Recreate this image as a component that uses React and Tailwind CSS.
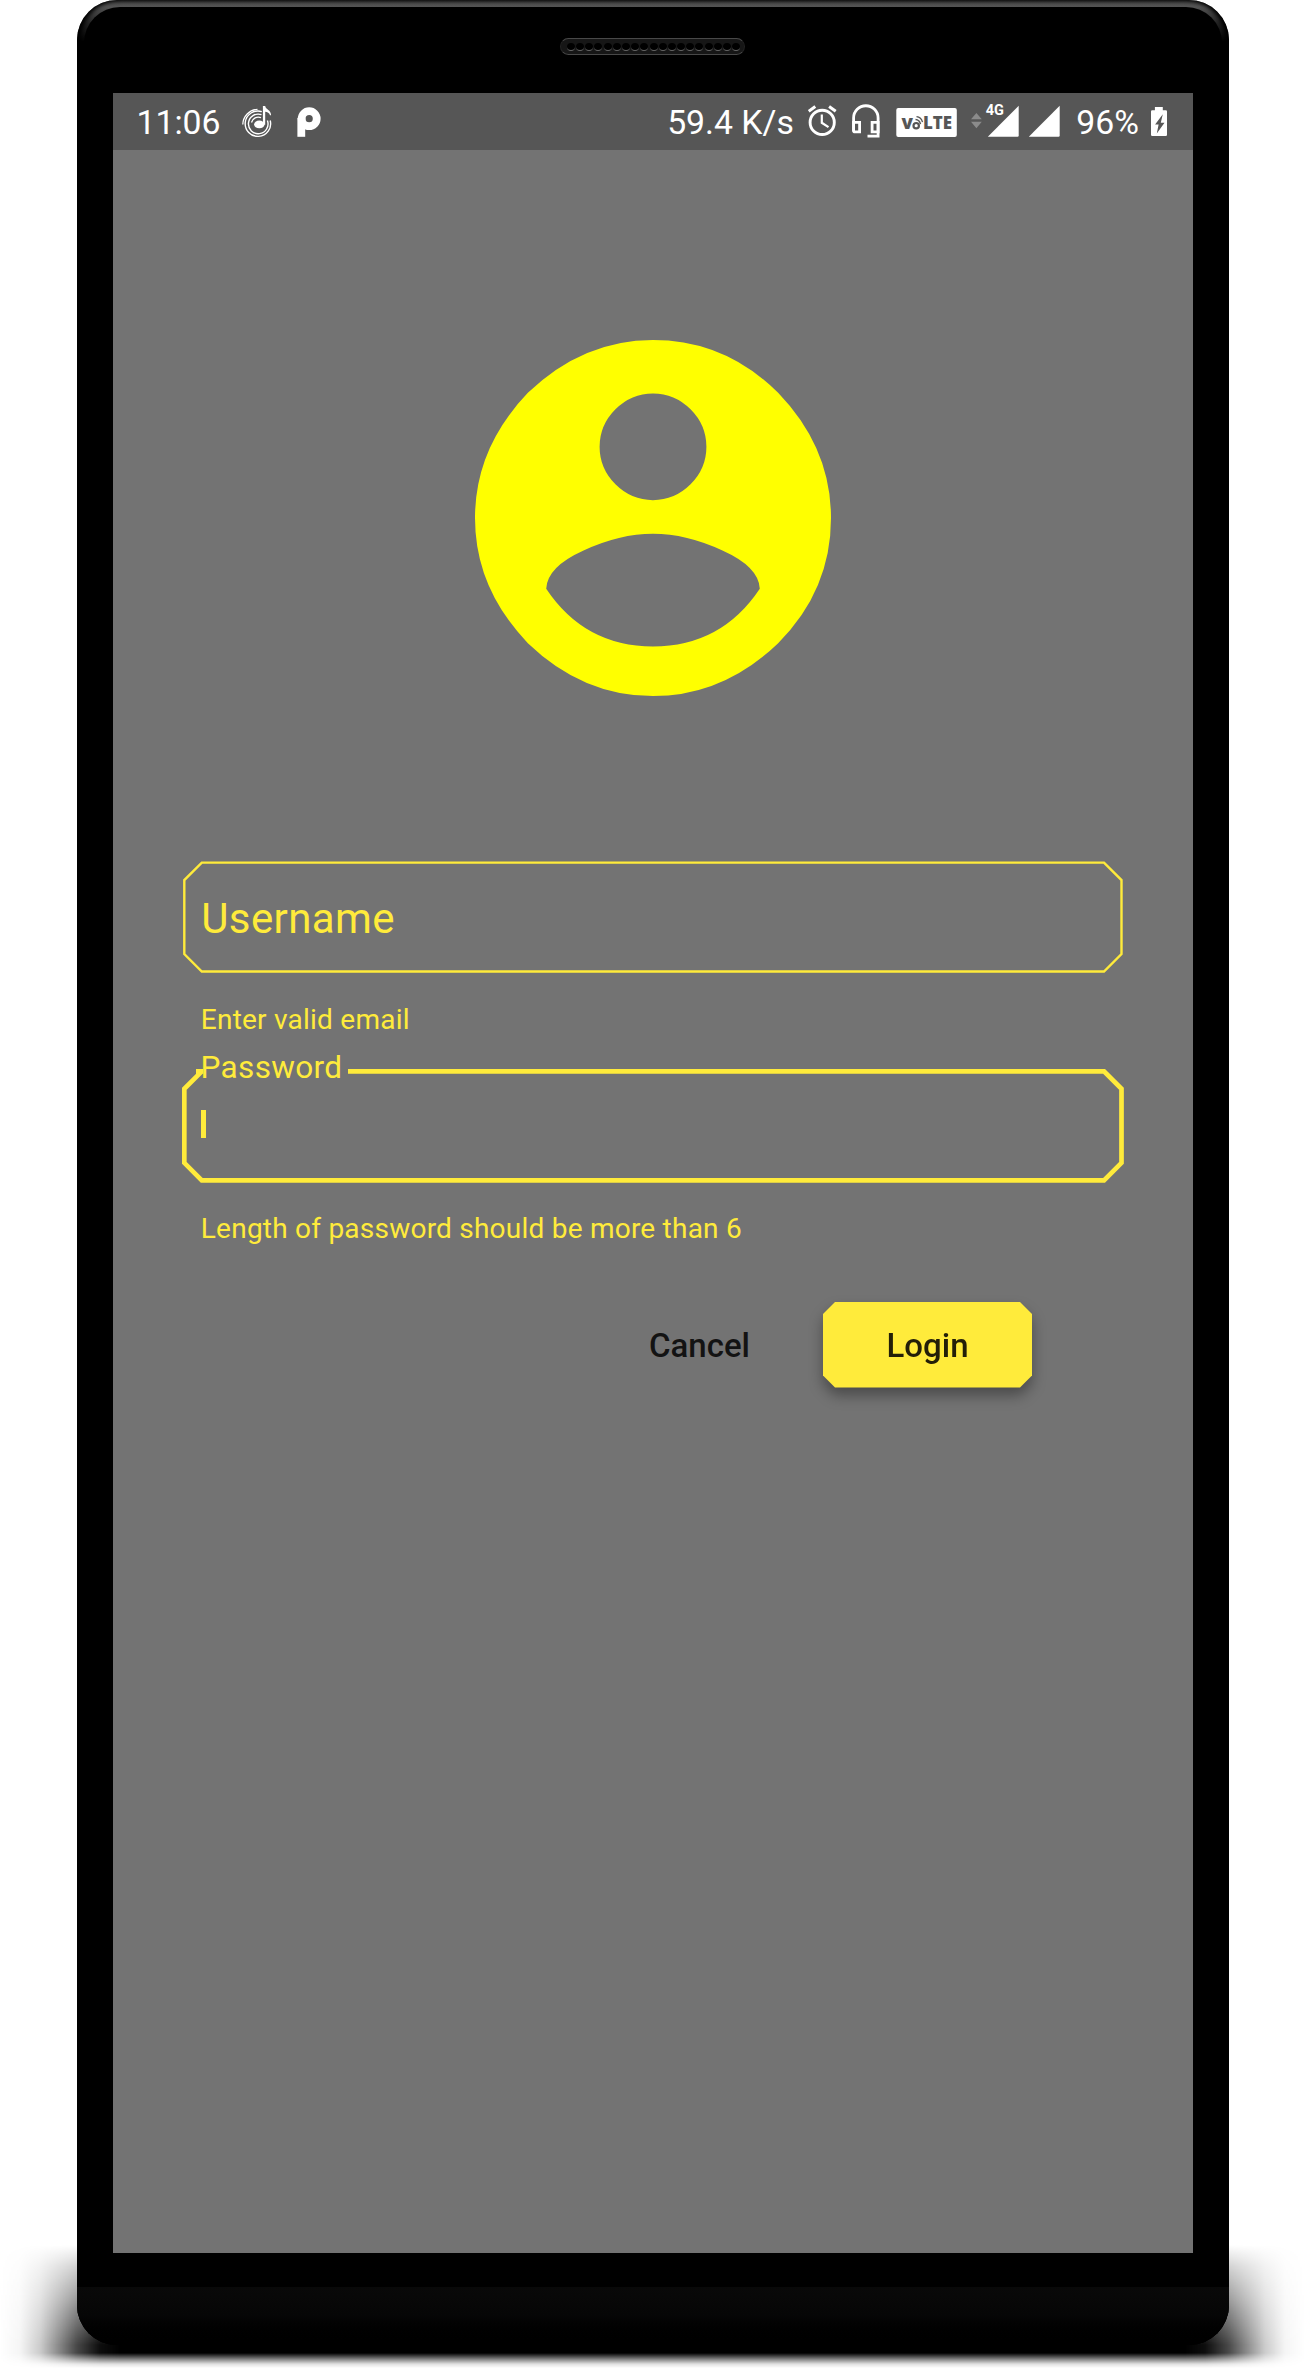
import React from "react";

function MusicIcon() {
  return (
    <svg className="ml-[21px] h-[57px] w-[30px]" viewBox="242 93 30 57" fill="none" stroke="#fff">
      <path d="M242.8 124.500A15.6 15.6 0 0 1 257.500 109.300" strokeWidth="1.3" />
      <path d="M261.800 111.600A12.700 12.700 0 1 0 270.200 120.500" strokeWidth="1.4" />
      <path d="M261.500 114.700A9.800 9.800 0 1 0 267.400 120.500" strokeWidth="1.4" />
      <path d="M261 117.700A6.900 6.900 0 0 0 251.500 122.500" strokeWidth="1.3" />
      <ellipse cx="259.300" cy="124.400" rx="5.200" ry="3.900" fill="#fff" stroke="none" />
      <path d="M262.900 106h2.300c.4 3.400 5.800 3.900 5.900 9.200l-1.100.1c-.5-2.300-2.800-3.300-4.800-3.600v13h-2.300z" fill="#fff" stroke="none" />
    </svg>
  );
}

function PLogo() {
  return (
    <svg className="ml-6 h-[57px] w-[26px]" viewBox="296 93 26 57">
      <circle cx="309.200" cy="118.700" r="7.500" fill="none" stroke="#fff" strokeWidth="7.800" />
      <rect x="297.400" y="118" width="7.800" height="18.800" fill="#fff" />
    </svg>
  );
}

function AlarmIcon() {
  return (
    <svg className="ml-[14px] h-[57px] w-[29px]" viewBox="808 93 29 57" fill="none" stroke="#fff">
      <circle cx="822.200" cy="122.400" r="12.100" strokeWidth="2.900" />
      <path d="M821.800 114.500v8.300l6.700 4.300" strokeWidth="2.200" />
      <path d="M808.700 111.300l6.600-4.800M835.700 111.300l-6.600-4.800" strokeWidth="3" />
    </svg>
  );
}

function HeadsetIcon() {
  return (
    <svg className="ml-[15px] h-[57px] w-[28px]" viewBox="852 93 28 57" fill="none" stroke="#fff" strokeWidth="2.800">
      <path d="M853.600 131.500V118a12.200 12.200 0 0 1 24.500 0v18.200h-10.600" />
      <path d="M853.600 122.300h6v9.600h-4.500q-1.500 0-1.500-1.500z" />
      <path d="M878.100 122.300h-6v9.600h6z" />
    </svg>
  );
}

function VolteBadge() {
  return (
    <svg className="ml-4 h-[57px] w-[61px]" viewBox="896 93 61 57">
      <rect x="896.300" y="108" width="60.500" height="29" rx="2" fill="#fff" />
      <g fill="#565656" fontFamily="Open Sans, sans-serif" fontWeight="800">
        <text x="901.600" y="128.900" fontSize="16.500">V</text>
        <text x="923" y="128.900" fontSize="16.900">LTE</text>
      </g>
      <g fill="none" stroke="#565656">
        <circle cx="916.200" cy="125.700" r="2.700" strokeWidth="2.200" />
        <path d="M915.500 119.600q4 .2 5 4.600" strokeWidth="1.500" />
        <path d="M916.500 116.700q4.800.6 6 5.500" strokeWidth="1.300" />
      </g>
    </svg>
  );
}

function Signals() {
  return (
    <svg className="ml-[14px] h-[57px] w-[89px]" viewBox="971 93 89 57">
      <path d="M971 119.300l5.400-6.300 5.400 6.300zM971 121.800h10.800l-5.400 6.400z" fill="#8b8b8b" />
      <path d="M987.800 136.800l30.900-31v29.800q0 1.200-1.200 1.200z" fill="#fff" />
      <path d="M1028.800 136.800l30.900-31v29.800q0 1.200-1.200 1.200z" fill="#fff" />
      <text x="985.800" y="115.200" fontSize="14.500" fontWeight="700" fontFamily="Roboto, sans-serif" fill="#fff" stroke="#565656" strokeWidth="2.500" paintOrder="stroke">4G</text>
    </svg>
  );
}

function BatteryIcon() {
  return (
    <svg className="ml-3 h-[57px] w-4" viewBox="1151 93 16 57">
      <path d="M1154.900 107h7.900v3.300h3q1.200 0 1.200 1.200v23.300q0 1.200-1.200 1.200h-13.600q-1.200 0-1.200-1.200v-23.300q0-1.200 1.200-1.200h2.700z" fill="#fff" />
      <path d="M1162.800 114.300l-7.700 10.200h3.500l-1.800 8.900 7.700-10.600h-3.700z" fill="#565656" />
    </svg>
  );
}

function StatusBar() {
  return (
    <div className="flex h-[57px] items-center bg-[#565656] pr-[26px] pl-[23.500px] text-[33.750px] leading-[40px] whitespace-nowrap text-white">
      <span className="w-[84.500px] pt-[2px]">11:06</span>
      <MusicIcon />
      <PLogo />
      <span className="ml-auto pt-[2px]">59.4 K/s</span>
      <AlarmIcon />
      <HeadsetIcon />
      <VolteBadge />
      <Signals />
      <span className="ml-[16.500px] pt-[2px]">96%</span>
      <BatteryIcon />
    </div>
  );
}

function Avatar() {
  return (
    <svg className="mx-auto mt-[190px] size-[356px]" viewBox="2 2 20 20" fill="#ffff00" fillRule="evenodd">
      <path d="M12 2Q16.060 2 19.030 4.970Q22 8.060 22 12Q22 16.060 19.030 19.030Q15.940 22 12 22Q8.060 22 4.970 19.030Q2 15.940 2 12Q2 8.060 4.970 4.970Q8.060 2 12 2ZM12 5Q10.780 5 9.890 5.890Q9 6.780 9 8Q9 9.220 9.890 10.110Q10.780 11 12 11Q13.220 11 14.110 10.110Q15 9.220 15 8Q15 6.780 14.110 5.890Q13.220 5 12 5ZM12 19.220Q8.160 19.220 6 15.980Q6.050 14.750 8.100 13.830Q10.130 12.890 12 12.890Q13.870 12.890 15.900 13.830Q17.950 14.750 18 15.980Q15.840 19.220 12 19.220Z" />
    </svg>
  );
}

function Speaker() {
  const holes = Array.from({ length: 19 }, (_, i) => i);
  return (
    <div className="relative mt-[38px] ml-[483px] flex h-[17px] w-[185px] items-center justify-center gap-[1.200px] rounded-full border border-t-[#484848] border-r-[#222] border-b-[#484848] border-l-[#222] bg-[#161616] pt-px pl-[2px]">
      {holes.map((i) => (
        <span key={i} className="size-2 rounded-full border-b border-[#666] bg-black" />
      ))}
    </div>
  );
}

function UsernameField() {
  return (
    <div className="relative flex h-[112px] items-center pt-[3px] pl-[19.200px]">
      <svg className="absolute inset-0 h-[112px] w-[942px]" viewBox="182 861 942 112" fill="none">
        <path d="M201.800 862.600H1104L1121.500 880.100V954L1104 971.500H201.800L184.300 954V880.100Z" stroke="#ffeb3b" strokeWidth="2.400" />
      </svg>
      <span className="text-[42px] leading-[50px] tracking-[0.400px]">Username</span>
    </div>
  );
}

function PasswordField() {
  return (
    <div className="relative mt-[32px] h-[114px] pt-[40.500px] pl-[19px]">
      <svg className="absolute inset-0 h-[114px] w-[942px]" viewBox="182 1069 942 114" fill="none">
        <path d="M348 1071.300H1104L1121.500 1088.800V1162.800L1104 1180.300H201.800L184.300 1162.800V1088.800L201.800 1071.300M196 1071.300H203.300" stroke="#ffeb3b" strokeWidth="4.700" />
      </svg>
      <span className="absolute top-[-19px] left-[18.500px] text-[31.500px] leading-9 tracking-[0.350px]">Password</span>
      <div className="h-[28.500px] w-[5px] bg-[#ffeb3b]" />
    </div>
  );
}

function Screen() {
  return (
    <div className="mx-9 mt-[38px] flex h-[2160px] flex-col bg-[#737373]">
      <StatusBar />
      <Avatar />
      <div className="mx-[69px] mt-[165px] flex flex-col whitespace-nowrap text-[#ffeb3b]">
        <UsernameField />
        <p className="mt-[30px] pl-[18.800px] text-[28px] leading-[34px] tracking-[0.230px]">Enter valid email</p>
        <PasswordField />
        <p className="mt-[29px] pl-[18.800px] text-[28px] leading-[34px] tracking-[0.230px]">Length of password should be more than 6</p>
        <div className="mt-[56px] flex items-center justify-end gap-[73px] pr-[92px] text-[33px] leading-10 font-medium">
          <button className="pt-[2px] text-[#131313]">Cancel</button>
          <div className="drop-shadow-[0_8px_7px_rgba(0,0,0,0.350)]">
            <button className="flex h-[85.500px] w-[209px] items-center justify-center bg-[#ffeb3b] pt-[2px] text-[#231f08] [clip-path:polygon(12px_0,calc(100%-12px)_0,100%_12px,100%_calc(100%-12px),calc(100%-12px)_100%,12px_100%,0_calc(100%-12px),0_12px)]">
              Login
            </button>
          </div>
        </div>
      </div>
    </div>
  );
}

export default function App() {
  return (
    <div className="relative h-[2370px] w-[1305px] overflow-hidden bg-white font-['Roboto',sans-serif]">
      <div className="absolute top-[2245px] left-0 h-[123px] w-[1305px] bg-[linear-gradient(to_right,transparent_0,rgba(0,0,0,0.040)_20px,rgba(0,0,0,0.200)_40px,rgba(0,0,0,0.480)_60px,rgba(0,0,0,0.720)_77px,rgba(0,0,0,0.950)_100px,#000_120px,#000_1185px,rgba(0,0,0,0.950)_1205px,rgba(0,0,0,0.720)_1228px,rgba(0,0,0,0.480)_1245px,rgba(0,0,0,0.200)_1265px,rgba(0,0,0,0.040)_1285px,transparent_1305px)] [mask-image:linear-gradient(to_bottom,transparent_0,rgba(0,0,0,0.250)_22px,rgba(0,0,0,0.550)_55px,rgba(0,0,0,0.850)_85px,#000_100px,#000_108px,rgba(0,0,0,0.500)_114px,rgba(0,0,0,0.120)_119px,transparent_123px)]" />
      <div className="relative ml-[77px] h-[2345px] w-[1152px] overflow-hidden rounded-[40px] bg-[linear-gradient(to_bottom,#444_0,#545454_7px,#222_24px,#000_42px)] shadow-[inset_4px_0_4px_#000,inset_-4px_0_4px_#000]">
        <div className="absolute inset-x-[7px] top-[7px] bottom-0 rounded-t-[36px] bg-black" />
        <div className="absolute inset-x-0 bottom-0 h-[58px] bg-linear-to-b from-[#090909] via-[#060606] to-black" />
        <div className="relative">
          <Speaker />
          <Screen />
        </div>
      </div>
    </div>
  );
}
